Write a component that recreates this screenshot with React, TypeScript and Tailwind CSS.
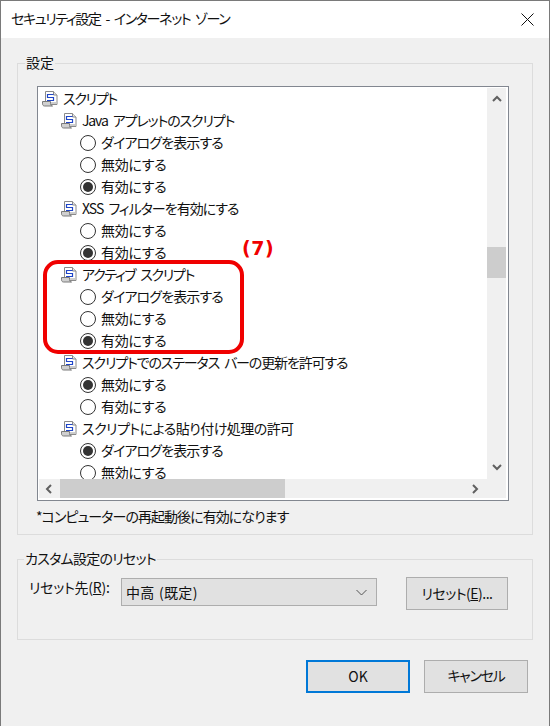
const uiFont = "font-['Noto_Sans_CJK_JP','Noto_Sans',sans-serif]";

function ScriptIcon() {
  return (
    <svg width="16" height="16" viewBox="0 0 16 16" className="shrink-0">
      <path d="M3.5 .5h8l3.5 3.5v9.5h-11.5z" fill="#fff" stroke="#8a8a8a" />
      <path d="M11.5 .5v3.5h3.5" fill="#e4e4e4" stroke="#8a8a8a" />
      <path d="M.5 10.5h8v2c0 1.5 1 2.5 2 2.5h-8c-1.2 0-2-1-2-2.2z" fill="#d0d0d0" stroke="#7a7a7a" />
      <path d="M11.5 3.5H5.5v3h6v3H5" fill="none" stroke="#1f45c8" strokeWidth="1.2" />
      <path d="M9 12h5" stroke="#9a9a9a" strokeWidth="1" />
    </svg>
  );
}

function Heading({ level, className, children }: { level: 0 | 1; className: string; children: React.ReactNode }) {
  return (
    <div className={`flex h-[22px] items-center gap-[5px] whitespace-nowrap ${level === 0 ? "pl-[3px]" : "pl-[22px]"}`}>
      <ScriptIcon />
      <span className={`pb-[2px] ${className}`}>{children}</span>
    </div>
  );
}

function Radio({ checked, className, children }: { checked?: boolean; className: string; children: React.ReactNode }) {
  return (
    <div className="flex h-[22px] items-center gap-[5px] whitespace-nowrap pl-[41px]">
      <span className="flex h-4 w-4 shrink-0 items-center justify-center rounded-full border border-[#333333] bg-white">
        {checked && <span className="h-2.5 w-2.5 rounded-full bg-[#333333]" />}
      </span>
      <span className={`pb-[2px] ${className}`}>{children}</span>
    </div>
  );
}

// scrollbar arrows, d is the chevron for the direction
function Arrow({ d }: { d: string }) {
  return (
    <svg width="10" height="10" viewBox="0 0 10 10" className="shrink-0">
      <path d={d} fill="none" stroke="#606060" strokeWidth="2" />
    </svg>
  );
}

function Group({ label, className, labelClass, children }: { label: string; className: string; labelClass: string; children: React.ReactNode }) {
  return (
    <div className={`relative border border-[#dcdcdc] ${className}`}>
      <span className={`absolute -top-[12px] bg-[#f0f0f0] px-[1px] leading-[20px] ${labelClass}`}>{label}</span>
      {children}
    </div>
  );
}

function Button({ children, primary, className }: { children: React.ReactNode; primary?: boolean; className: string }) {
  return (
    <button
      className={`flex h-[33px] items-center justify-center bg-[#e1e1e1] ${
        primary ? "border-2 border-[#0078d7]" : "border border-[#adadad]"
      } ${className}`}
    >
      {children}
    </button>
  );
}

const dialogText = "tracking-[-0.87px]";
const offText = "tracking-[-0.26px]";

export default function App() {
  return (
    <div className={`relative h-[726px] w-[550px] overflow-hidden border-x border-t border-[#7a7a7a] bg-[#f0f0f0] text-[14px] text-[#111111] [font-feature-settings:'palt'] [word-spacing:3px] ${uiFont}`}>
      {/* Title bar */}
      <div className="flex h-[37px] items-center justify-between bg-white pl-[10px] pr-[15px]">
        <span className="pb-[2px] tracking-[-1.35px]">セキュリティ設定 - インターネット ゾーン</span>
        <svg width="13" height="13" viewBox="0 0 13 13">
          <path d="M.5 .5l12 12M12.5 .5l-12 12" stroke="#111" strokeWidth="1" />
        </svg>
      </div>

      <div className="px-4 pt-[25px]">
        <Group label="設定" labelClass="left-[7px]" className="h-[472px] pl-[19px] pt-[22px]">
          {/* List box */}
          <div className="h-[415px] w-[472px] border border-[#828790] bg-white pb-[2px] pl-[1px] pr-[2px] pt-[1px]">
            <div className="grid grid-cols-[448px_19px] grid-rows-[391px_19px]">
              <div className="overflow-hidden bg-white">
                <Heading level={0} className="tracking-[-1.3px]">スクリプト</Heading>
                <Heading level={1} className="tracking-[-1.13px]">Java アプレットのスクリプト</Heading>
                <Radio className={dialogText}>ダイアログを表示する</Radio>
                <Radio className={offText}>無効にする</Radio>
                <Radio checked className={offText}>有効にする</Radio>
                <Heading level={1} className="tracking-[-1px]">XSS フィルターを有効にする</Heading>
                <Radio className={offText}>無効にする</Radio>
                <Radio checked className={offText}>有効にする</Radio>
                <Heading level={1} className="tracking-[-1.3px]">アクティブ スクリプト</Heading>
                <Radio className={dialogText}>ダイアログを表示する</Radio>
                <Radio className={offText}>無効にする</Radio>
                <Radio checked className={offText}>有効にする</Radio>
                <Heading level={1} className="tracking-[-1.13px]">スクリプトでのステータス バーの更新を許可する</Heading>
                <Radio checked className={offText}>無効にする</Radio>
                <Radio className={offText}>有効にする</Radio>
                <Heading level={1} className="tracking-[-0.55px]">スクリプトによる貼り付け処理の許可</Heading>
                <Radio checked className={dialogText}>ダイアログを表示する</Radio>
                <Radio className={offText}>無効にする</Radio>
              </div>
              {/* Vertical scrollbar */}
              <div className="flex flex-col items-center bg-[#f0f0f0]">
                <div className="mt-[6px]">
                  <Arrow d="M1 7l4-4 4 4" />
                </div>
                <div className="mt-[143px] h-[31px] w-full bg-[#cdcdcd]" />
                <div className="mt-[184px]">
                  <Arrow d="M1 3l4 4 4-4" />
                </div>
              </div>
              {/* Horizontal scrollbar */}
              <div className="flex items-center bg-[#f0f0f0]">
                <div className="ml-[5px]">
                  <Arrow d="M7 1L3 5l4 4" />
                </div>
                <div className="ml-[6px] h-full w-[225px] bg-[#cdcdcd]" />
                <div className="ml-[185px]">
                  <Arrow d="M3 1l4 4-4 4" />
                </div>
              </div>
              <div className="bg-[#f0f0f0]" />
            </div>
          </div>
          <p className="ml-[-1px] mt-[5px] leading-[20px] tracking-[-0.95px]">*コンピューターの再起動後に有効になります</p>
        </Group>

        <Group label="カスタム設定のリセット" labelClass="left-[6px] tracking-[-0.75px]" className="mt-6 h-[81px] pl-[11px] pt-[18px]">
          <div className="flex items-start">
            <span className="-mt-[1px] w-[92px] leading-[20px] tracking-[-0.25px]">
              リセット先(<span className="underline">R</span>):
            </span>
            <div className="flex h-7 w-[256px] items-center justify-between border border-[#adadad] bg-[#e1e1e1] pl-[4px] pr-[9px]">
              <span className="tracking-[0.3px] [word-spacing:1px]">中高 (既定)</span>
              <svg width="11" height="7" viewBox="0 0 11 7">
                <path d="M.5 1l5 5 5-5" fill="none" stroke="#555" strokeWidth="1" />
              </svg>
            </div>
            <Button className="-mt-[1px] ml-[29px] w-[102px] tracking-[-0.5px]">
              リセット(<span className="underline">E</span>)...
            </Button>
          </div>
        </Group>

        <div className="mt-5 flex justify-end gap-[14px] pr-[5px]">
          <Button primary className="w-[104px]">OK</Button>
          <Button className="w-[104px] pb-[2px] tracking-[-1.3px]">キャンセル</Button>
        </div>
      </div>

      {/* Callout drawn over the screenshot */}
      <div className="absolute left-[42px] top-[259px] h-[94px] w-[201px] rounded-[15px] border-[4px] border-[#f00000]" />
      <span className="absolute left-[241px] top-[234px] font-['DejaVu_Sans',sans-serif] text-[19px] font-bold leading-[26px] tracking-[0.5px] text-[#f00000]">(7)</span>
    </div>
  );
}
